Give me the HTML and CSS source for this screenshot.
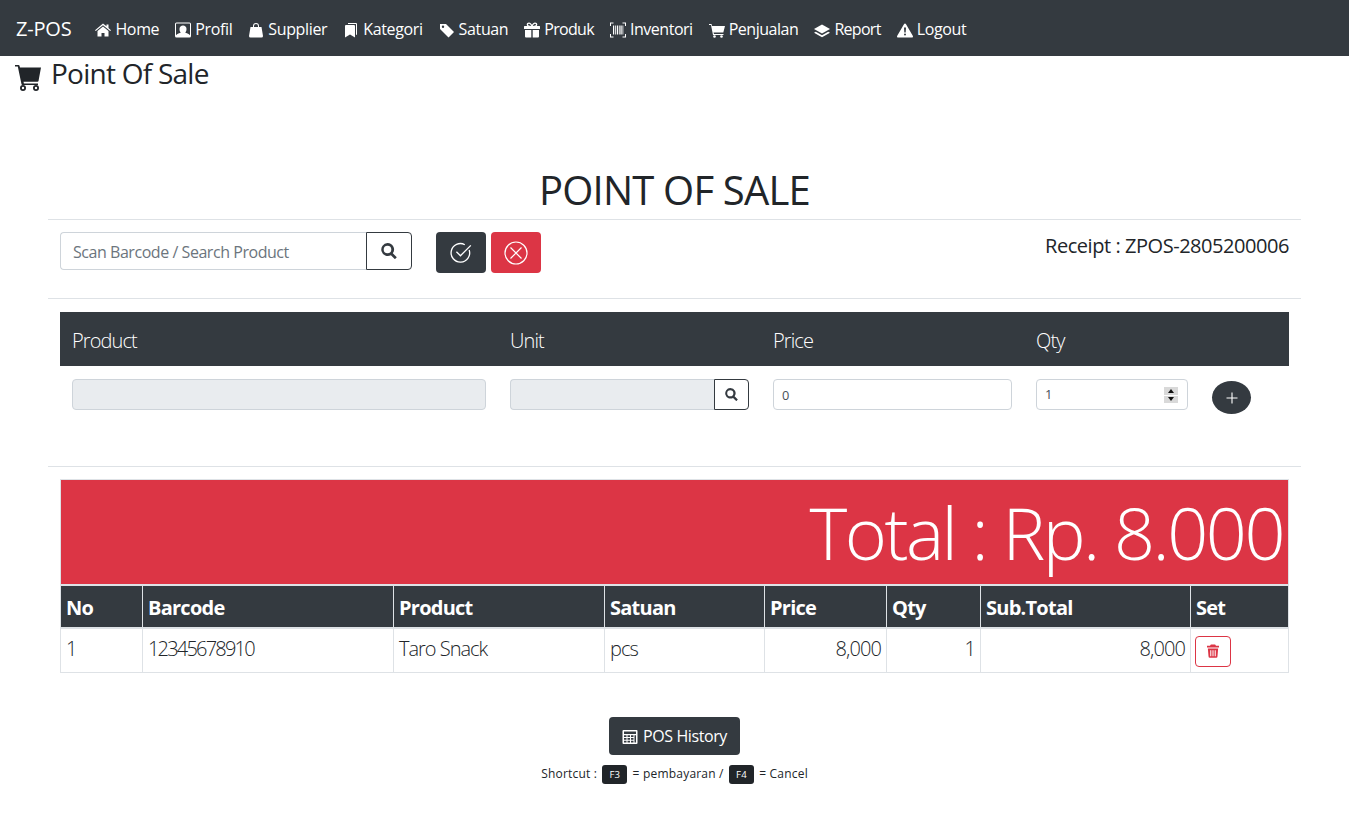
FILE: index.html
```html
<!DOCTYPE html>
<html lang="id">
<head>
<meta charset="utf-8">
<title>Z-POS</title>
<link rel="stylesheet" href="styles.css">
</head>
<body>
<nav class="navbar">
  <a class="brand">Z-POS</a>
  <a class="nav-link"><svg class="ni" viewBox="0 0 16 16"><path d="M8 1.500 0 8.200l.8.900L8 3.200l7.200 5.900.8-.9-2.500-2.100V2.500h-2v1.800z"/><path d="M8 4.500 2.500 9v5.500h4v-3.500h3v3.500h4V9z"/></svg>Home</a>
  <a class="nav-link"><svg class="ni" viewBox="0 0 16 16"><path fill-rule="evenodd" d="M1.500 .5h13A1.500 1.500 0 0 1 16 2v12a1.500 1.500 0 0 1-1.500 1.500h-13A1.500 1.500 0 0 1 0 14V2A1.500 1.500 0 0 1 1.500.5zm0 1a.5.5 0 0 0-.5.5v11.200C2 11.500 5 11 5.800 10.500 4.800 9.500 4.500 8.500 4.500 6.700 4.500 4.800 6 3.500 8 3.500s3.500 1.300 3.500 3.200c0 1.800-.3 2.800-1.300 3.800.8.500 3.800 1 4.800 2.700V2a.5.5 0 0 0-.5-.5z"/></svg>Profil</a>
  <a class="nav-link"><svg class="ni" viewBox="0 0 16 16"><path fill-rule="evenodd" d="M5 5V4a3 3 0 0 1 6 0v1h2.500L15 14a1.500 1.500 0 0 1-1.500 1.500h-11A1.500 1.500 0 0 1 1 14l1.500-9zm1 0h4V4a2 2 0 0 0-4 0z"/></svg>Supplier</a>
  <a class="nav-link"><svg class="ni" viewBox="0 0 16 16"><path d="M3 3h8a1 1 0 0 1 1 1v11.500l-5-3-5 3V4a1 1 0 0 1 1-1z"/><path d="M5 1h8a1 1 0 0 1 1 1v11l-1-.6V2H5z"/></svg>Kategori</a>
  <a class="nav-link"><svg class="ni" viewBox="0 0 16 16"><path fill-rule="evenodd" d="M1 2h6l8 8-5.500 5.500-8-8A1.500 1.500 0 0 1 1 6.500zm3 1.500a1.200 1.200 0 1 0 0 2.400 1.200 1.200 0 0 0 0-2.400z"/></svg>Satuan</a>
  <a class="nav-link tight"><svg class="ni" viewBox="0 0 16 16"><path fill-rule="evenodd" d="M5 .5c1.300 0 2.400 1 3 2.300C8.600 1.500 9.700.5 11 .5c1.400 0 2.300.9 2.300 2 0 .5-.2 1-.5 1.500H15.500a.5.5 0 0 1 .5.5V7H0V4.500A.5.5 0 0 1 .5 4h2.700c-.3-.5-.5-1-.5-1.500 0-1.100.9-2 2.300-2zm0 1.200c-.6 0-1 .3-1 .8 0 .7.800 1.500 3.200 1.500C6.800 2.800 6 1.700 5 1.700zm6 0c-1 0-1.800 1.100-2.200 2.300 2.400 0 3.200-.8 3.200-1.500 0-.5-.4-.8-1-.8z"/><path d="M1 8h6.300v7.500H2A1 1 0 0 1 1 14.500zM8.700 8H15v6.500a1 1 0 0 1-1 1H8.700z"/></svg>Produk</a>
  <a class="nav-link snug"><svg class="ni" viewBox="0 0 16 16"><path d="M0 .5h3.500v1H1V4H0zm12.500 0H16V4h-1V1.500h-2.500zM0 12h1v2.500h2.500v1H0zm15 0h1v3.500h-3.500v-1H15zM3 3.500h1.200v9H3zm2.200 0h.8v9h-.8zm1.600 0h1.300v9H6.800zm2.100 0h.8v9h-.8zm1.500 0h1.300v9h-1.300zm2.100 0h.8v9h-.8z"/></svg>Inventori</a>
  <a class="nav-link snug"><svg class="ni" viewBox="0 0 16 16"><path d="M0 2h2.500l.5 2h13l-1.700 6.500H4.500L5 12h9.500v1H4L2 3H0z"/><circle cx="5.500" cy="14.500" r="1.300"/><circle cx="12.500" cy="14.500" r="1.300"/></svg>Penjualan</a>
  <a class="nav-link tight"><svg class="ni" viewBox="0 0 16 16"><path d="M8 2.500 16 7 8 11.500 0 7z"/><path d="M1.800 9.700 8 13.200l6.200-3.500L16 10.800l-8 4.500-8-4.500z"/></svg>Report</a>
  <a class="nav-link"><svg class="ni" viewBox="0 0 16 16"><path fill-rule="evenodd" d="M8 1.500c.4 0 .7.200.9.600l7 12c.3.600-.1 1.400-.9 1.400H1c-.8 0-1.200-.8-.9-1.400l7-12c.2-.4.500-.6.900-.6zM7 5.500l.3 5h1.400l.3-5zm1 6a1 1 0 1 0 0 2 1 1 0 0 0 0-2z"/></svg>Logout</a>
</nav>

<h3 class="page-title"><svg class="title-cart" viewBox="0 0 26 27"><path d="M0 1h3.500a1 1 0 0 1 1 .8L5 3.500h21l-2.500 13.500a1 1 0 0 1-1 .8H8.500l.4 1.700h14.100v1.500H7.500a1 1 0 0 1-1-.8L2.800 2.500H0z"/><path fill-rule="evenodd" d="M8 21a3 3 0 1 1 0 6 3 3 0 0 1 0-6zm0 1.800a1.200 1.200 0 1 0 0 2.400 1.200 1.200 0 0 0 0-2.400zM21 21a3 3 0 1 1 0 6 3 3 0 0 1 0-6zm0 1.800a1.200 1.200 0 1 0 0 2.400 1.200 1.200 0 0 0 0-2.400z"/></svg>Point Of Sale</h3>

<main class="container">
  <h1 class="main-title">POINT OF SALE</h1>
  <hr class="rule">
  <section class="toolbar">
    <div class="search-group">
      <input class="field search-input" type="text" placeholder="Scan Barcode / Search Product">
      <button class="search-btn" type="button"><svg class="search-icon" viewBox="0 0 16 16"><path d="M6.500 0a6.500 6.500 0 0 1 5.300 10.300l4 4-1.900 1.900-4-4A6.500 6.500 0 1 1 6.500 0zm0 2.700a3.800 3.800 0 1 0 0 7.600 3.800 3.800 0 0 0 0-7.600z"/></svg></button>
    </div>
    <button class="action dark" type="button"><svg class="action-icon" viewBox="0 0 22 22"><path d="M18.500 8.200A8.500 8.500 0 1 1 14.500 3.400" fill="none" stroke="currentColor" stroke-width="1.200"/><path d="M6.800 9.800l3.700 3.700L20 4" fill="none" stroke="currentColor" stroke-width="1.200"/></svg></button>
    <button class="action red" type="button"><svg class="action-icon" viewBox="0 0 24 24"><circle cx="12" cy="12" r="11" fill="none" stroke="currentColor" stroke-width="1.200"/><path d="M6.500 6.500l11 11m0-11-11 11" stroke="currentColor" stroke-width="1.200"/></svg></button>
    <div class="receipt">Receipt : ZPOS-2805200006</div>
  </section>
  <hr class="rule">

  <table class="entry">
    <colgroup><col class="e1"><col class="e2"><col class="e3"><col class="e4"><col></colgroup>
    <thead><tr><th>Product</th><th>Unit</th><th>Price</th><th>Qty</th><th></th></tr></thead>
    <tbody>
      <tr>
        <td><input class="field small readonly" type="text" readonly></td>
        <td><div class="unit-group"><input class="field small readonly joined" type="text" readonly><button class="unit-btn" type="button"><svg class="unit-icon" viewBox="0 0 16 16"><path d="M6.500 0a6.500 6.500 0 0 1 5.300 10.300l4 4-1.900 1.900-4-4A6.500 6.500 0 1 1 6.500 0zm0 2.700a3.800 3.800 0 1 0 0 7.600 3.800 3.800 0 0 0 0-7.600z"/></svg></button></div></td>
        <td><input class="field small" type="text" value="0"></td>
        <td><div class="qty"><span>1</span><span class="spin"><i class="up"></i><i class="down"></i></span></div></td>
        <td><button class="add" type="button"><svg class="plus" viewBox="0 0 12 12"><path d="M6 .5v11M.5 6h11" stroke="currentColor" stroke-width="1.100"/></svg></button></td>
      </tr>
    </tbody>
  </table>
  <hr class="rule">

  <section class="cart">
    <div class="total">Total : Rp. 8.000</div>
    <table class="items">
      <colgroup><col class="c1"><col class="c2"><col class="c3"><col class="c4"><col class="c5"><col class="c6"><col class="c7"><col class="c8"></colgroup>
      <thead><tr><th>No</th><th>Barcode</th><th>Product</th><th>Satuan</th><th>Price</th><th>Qty</th><th>Sub.Total</th><th>Set</th></tr></thead>
      <tbody><tr>
        <td>1</td><td class="code">12345678910</td><td>Taro Snack</td><td>pcs</td>
        <td class="num">8,000</td><td class="num">1</td><td class="num">8,000</td>
        <td class="set"><button class="del" type="button"><svg class="trash" viewBox="0 0 14 16"><path fill-rule="evenodd" d="M4.500.5h5L10.500 2H14v2H0V2h3.500zM1 5h12l-.8 9.500A1.500 1.500 0 0 1 10.700 16H3.300a1.500 1.500 0 0 1-1.500-1.500zm2.800 2v7h1.200V7zm2.600 0v7h1.200V7zm2.600 0v7h1.200V7z"/></svg></button></td>
      </tr></tbody>
    </table>
  </section>

  <div class="history">
    <button class="history-btn" type="button"><svg class="hist-icon" viewBox="0 0 16 16"><path fill-rule="evenodd" d="M1.500 1h13a1 1 0 0 1 1 1v12a1 1 0 0 1-1 1h-13a1 1 0 0 1-1-1V2a1 1 0 0 1 1-1zM2 2.500V5h12V2.500zM2 6.200v1.800h2.500V6.200zm3.500 0v1.800h2.500V6.200zm3.500 0v1.800h2.500V6.200zm3.500 0v7.300H14V6.200zM2 9v1.800h2.500V9zm3.500 0v1.800h2.500V9zM9 9v1.800h2.500V9zm-7 2.800v1.700h2.500v-1.700zm3.500 0v1.700h2.500v-1.700zm3.500 0v1.700h2.500v-1.700z"/></svg>POS History</button>
    <p class="shortcut">Shortcut : <kbd>F3</kbd> = pembayaran / <kbd>F4</kbd> = Cancel</p>
  </div>
</main>
</body>
</html>
```
FILE: styles.css
```css
* { box-sizing: border-box; }
html, body { margin: 0; }
body {
  font-family: "Open Sans", "Noto Sans", sans-serif;
  font-size: 16px;
  line-height: 1.5;
  color: #212529;
  background: #fff;
}
button { font-family: inherit; cursor: pointer; padding: 0; }
.navbar {
  height: 56px;
  background: #343a40;
  display: flex;
  align-items: center;
  padding: 2px 16px 0;
  color: #fff;
}
.brand { font-size: 20px; line-height: 30px; margin-right: 16px; letter-spacing: -.2px; }
.nav-link {
  display: flex;
  align-items: center;
  padding: 0 8px;
  font-size: 16px;
  letter-spacing: -.36px;
}
.nav-link.tight { letter-spacing: -.7px; }
.nav-link.snug { letter-spacing: -.47px; }
.ni { width: 16px; height: 16px; margin-right: 4px; fill: #fff; margin-top: 1px; flex: none; }
.page-title {
  margin: -1px 0 0;
  padding-left: 15px;
  height: 36px;
  font-size: 28px;
  line-height: 36px;
  font-weight: 400;
  display: flex;
  align-items: center;
  letter-spacing: -.75px;
}
.title-cart { width: 26px; height: 27px; margin-right: 10px; margin-top: 8px; fill: #212529; flex: none; }
.container { width: 1253px; margin-left: 48px; }
.main-title {
  margin: 75px 0 0;
  font-size: 40px;
  line-height: 48px;
  font-weight: 400;
  text-align: center;
  letter-spacing: -.8px;
}
.rule { margin: 5px 0 0; border: 0; border-top: 1px solid #dee2e6; height: 1px; }
.toolbar { display: flex; padding: 12px 12px 20px; align-items: flex-start; }
.field {
  display: block;
  width: 100%;
  border: 1px solid #ced4da;
  border-radius: 4px;
  background: #fff;
  font-family: inherit;
  color: #495057;
  outline: none;
}
.search-group { display: flex; width: 352px; height: 38px; }
.search-input {
  height: 38px;
  flex: 1;
  min-width: 0;
  padding: 2px 12px 0;
  font-size: 16px;
  letter-spacing: -.45px;
  border-radius: 4px 0 0 4px;
  border-right: 0;
}
.search-input::placeholder { color: #6c757d; opacity: 1; }
.search-btn {
  width: 46px;
  height: 38px;
  background: #fff;
  border: 1px solid #343a40;
  border-radius: 0 4px 4px 0;
  display: flex;
  align-items: center;
  justify-content: center;
}
.search-icon { width: 16px; height: 16px; fill: #343a40; }
.action {
  width: 50px;
  height: 41px;
  border: 0;
  border-radius: 4px;
  color: #fff;
  display: flex;
  align-items: center;
  justify-content: center;
}
.dark { background: #343a40; margin-left: 24px; }
.red { background: #dc3545; margin-left: 5px; }
.action-icon { width: 24px; height: 24px; }
.receipt { margin-left: auto; font-size: 20px; line-height: 28px; letter-spacing: -.45px; }
.entry {
  width: 1229px;
  margin: 13px 0 0 12px;
  border-collapse: collapse;
  table-layout: fixed;
}
.e1 { width: 438px; }
.e2, .e3 { width: 263px; }
.e4 { width: 176px; }
.entry th {
  height: 54px;
  background: #343a40;
  color: #fff;
  font-weight: 300;
  font-size: 20px;
  text-align: left;
  padding: 4px 12px 0;
  letter-spacing: -.9px;
}
.entry td { padding: 13px 12px 0; height: 95px; vertical-align: top; }
.small {
  height: 31px;
  padding: 0 8px;
  font-size: 12.800px;
}
.readonly { background: #e9ecef; }
.unit-group { display: flex; }
.joined { flex: 1; min-width: 0; border-radius: 4px 0 0 4px; border-right: 0; }
.unit-btn {
  width: 35px;
  height: 31px;
  flex: none;
  background: #fff;
  border: 1px solid #343a40;
  border-radius: 0 4px 4px 0;
  display: flex;
  align-items: center;
  justify-content: center;
}
.unit-icon { width: 13px; height: 13px; fill: #343a40; }
.qty {
  height: 31px;
  border: 1px solid #ced4da;
  border-radius: 4px;
  padding: 1px 9px 0 8px;
  font-size: 12.800px;
  color: #495057;
  display: flex;
  align-items: center;
  justify-content: space-between;
}
.spin { width: 14px; height: 16px; display: flex; flex-direction: column; gap: 1px; background: #fff; }
.spin i { flex: 1; background: #d9d9d9; display: flex; align-items: center; justify-content: center; }
.spin i::after { content: ""; border-left: 3px solid transparent; border-right: 3px solid transparent; }
.up::after { border-bottom: 4px solid #111; }
.down::after { border-top: 4px solid #111; }
.add {
  width: 39px;
  height: 33px;
  margin-top: 2px;
  border: 0;
  border-radius: 50%;
  background: #343a40;
  color: #fff;
  display: flex;
  align-items: center;
  justify-content: center;
}
.plus { width: 12px; height: 12px; }
.cart { padding: 12px 12px 0; }
.total {
  height: 106px;
  background: #dc3545;
  border: 1px solid #dee2e6;
  color: #fff;
  font-size: 72px;
  line-height: 104px;
  font-weight: 300;
  text-align: right;
  padding-right: 5px;
  letter-spacing: -2.500px;
}
.items { width: 1229px; border-collapse: collapse; table-layout: fixed; }
.c1 { width: 82px; }
.c2 { width: 251px; }
.c3 { width: 211px; }
.c4 { width: 160px; }
.c5 { width: 122px; }
.c6 { width: 94px; }
.c7 { width: 210px; }
.items th {
  height: 42px;
  background: #343a40;
  color: #fff;
  font-size: 20px;
  font-weight: 700;
  text-align: left;
  padding: 4px 5px 0;
  border: 1px solid #dee2e6;
  border-bottom: 2px solid #dee2e6;
  letter-spacing: -.75px;
}
.items td {
  height: 45px;
  padding: 0 5px 3px;
  font-size: 20px;
  font-weight: 300;
  border: 1px solid #dee2e6;
  letter-spacing: -1px;
}
.items td.code { letter-spacing: -1.800px; }
.items td.num { text-align: right; letter-spacing: -.9px; }
.items td.set { padding: 2px 4px 0; }
.del {
  width: 36px;
  height: 31px;
  background: #fff;
  border: 1px solid #dc3545;
  border-radius: 4px;
  display: flex;
  align-items: center;
  justify-content: center;
}
.trash { width: 12px; height: 14px; fill: #dc3545; }
.history { display: flex; flex-direction: column; align-items: center; margin-top: 44px; }
.history-btn {
  height: 38px;
  width: 131px;
  background: #343a40;
  border: 0;
  border-radius: 4px;
  color: #fff;
  font-size: 16px;
  letter-spacing: -.4px;
  display: flex;
  align-items: center;
  justify-content: center;
}
.hist-icon { width: 16px; height: 16px; fill: #fff; margin-right: 5px; margin-top: 2px; }
.shortcut { margin: 8px 0 0; font-size: 12px; line-height: 22px; letter-spacing: .2px; }
kbd {
  display: inline-block;
  background: #212529;
  color: #fff;
  border-radius: 3px;
  font-family: inherit;
  font-size: 9.600px;
  line-height: 15px;
  padding: 2px 7px;
  font-weight: 400;
  margin: 0 2px;
}
```
